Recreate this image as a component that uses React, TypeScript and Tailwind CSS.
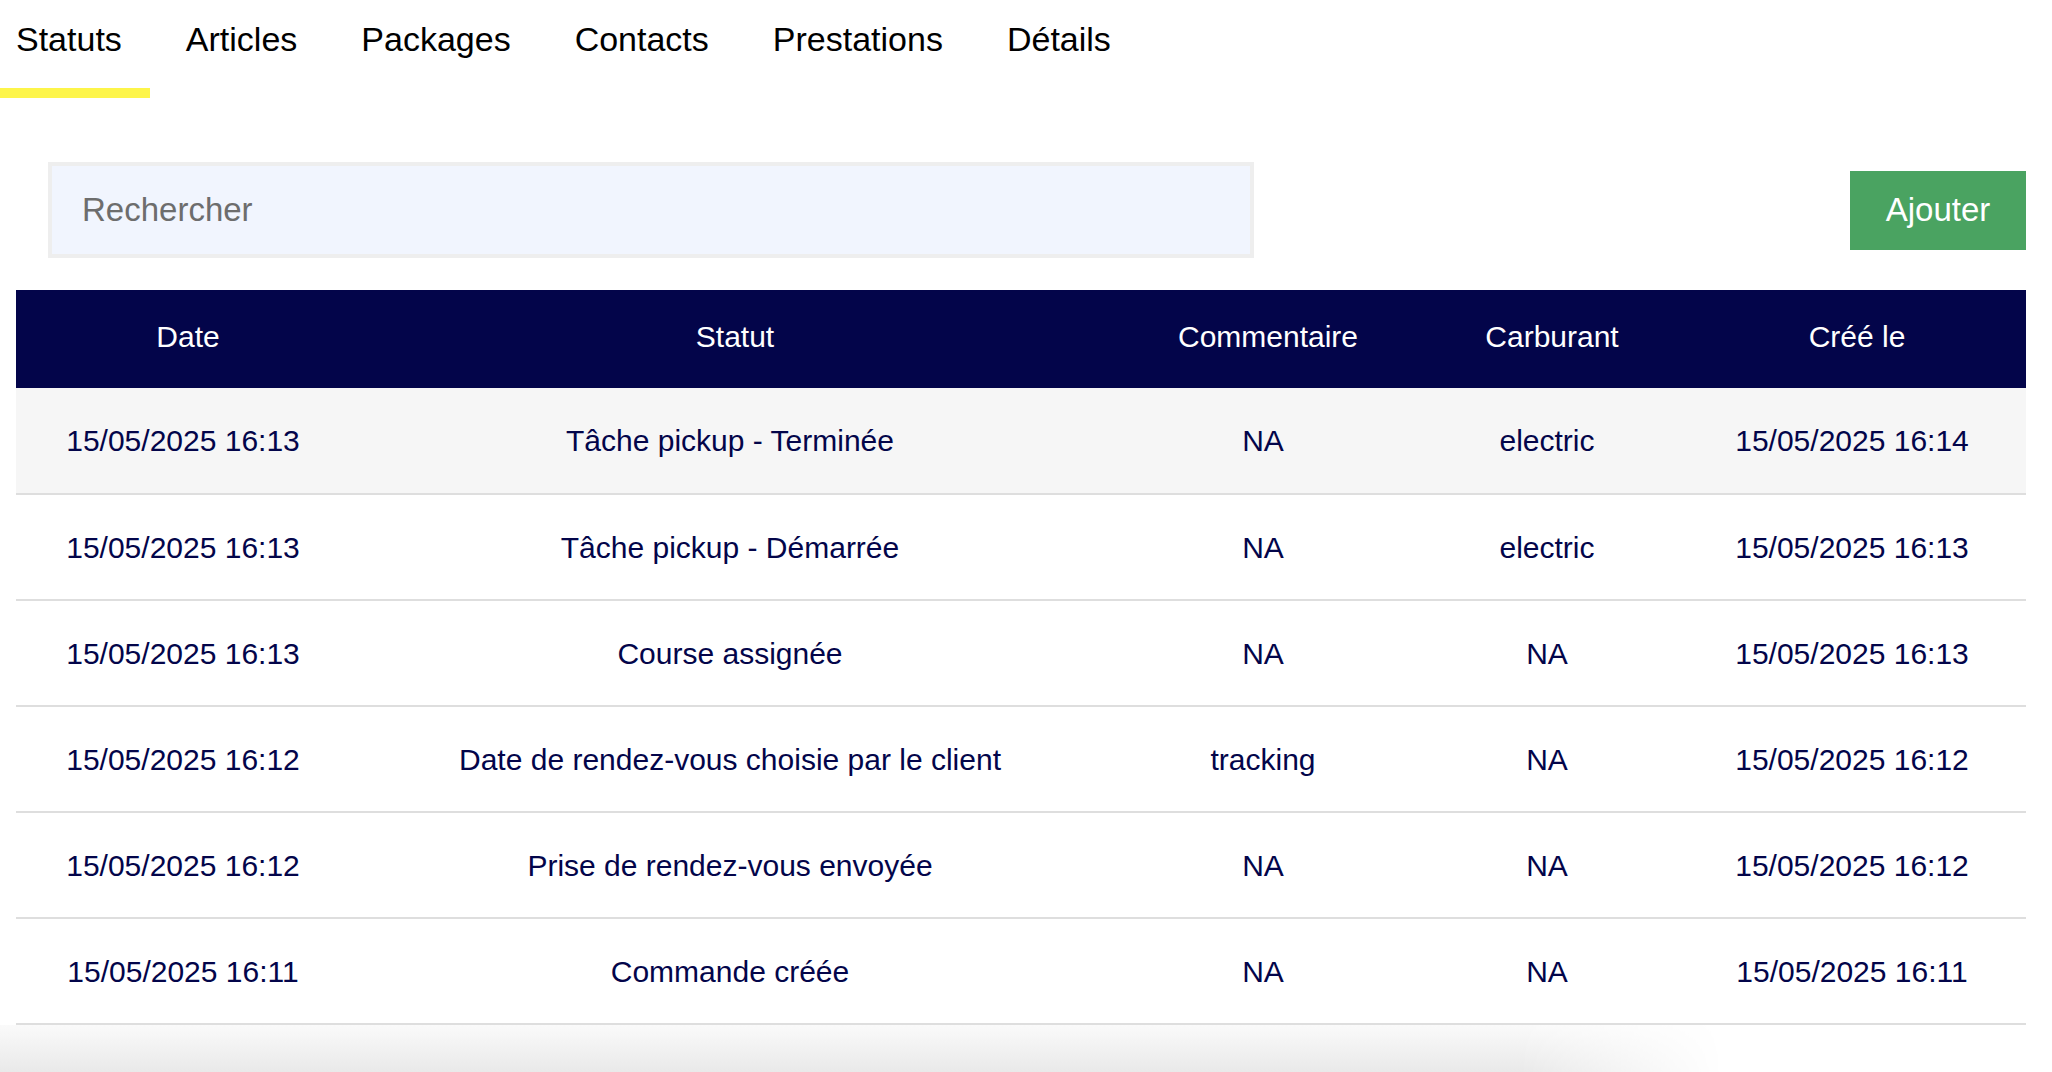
const tabs = ['Statuts', 'Articles', 'Packages', 'Contacts', 'Prestations', 'Détails']

const rows = [
    ['15/05/2025 16:13', 'Tâche pickup - Terminée', 'NA', 'electric', '15/05/2025 16:14'],
    ['15/05/2025 16:13', 'Tâche pickup - Démarrée', 'NA', 'electric', '15/05/2025 16:13'],
    ['15/05/2025 16:13', 'Course assignée', 'NA', 'NA', '15/05/2025 16:13'],
    ['15/05/2025 16:12', 'Date de rendez-vous choisie par le client', 'tracking', 'NA', '15/05/2025 16:12'],
    ['15/05/2025 16:12', 'Prise de rendez-vous envoyée', 'NA', 'NA', '15/05/2025 16:12'],
    ['15/05/2025 16:11', 'Commande créée', 'NA', 'NA', '15/05/2025 16:11'],
]

const headers = ['Date', 'Statut', 'Commentaire', 'Carburant', 'Créé le']

export default function App() {
    return (
        <div className="min-h-[1072px] bg-white font-['Liberation_Sans',Arial,sans-serif]">
            <nav className="flex h-[98px] items-stretch gap-[20px]">
                {tabs.map((tab, i) => (
                    <div key={tab} className="flex flex-col">
                        <div className="flex flex-1 items-center pb-[10px] pl-4 pr-[28px] text-[34px] text-black">
                            {tab}
                        </div>
                        <div className={i === 0 ? 'h-[10px] bg-[#fdf54a]' : 'h-[10px]'} />
                    </div>
                ))}
            </nav>

            <div className="pl-4 pr-[26px]">
                <div className="mt-16 flex items-center justify-between">
                    <input
                        className="ml-8 h-[96px] w-[1206px] border-4 border-[#eeeeee] bg-[#f1f5fe] px-[30px] text-[33px] text-[#333] outline-none placeholder:text-[#6d6d6d]"
                        placeholder="Rechercher"
                    />
                    <button className="h-[79px] w-[176px] bg-[#4aa361] text-[33px] text-white">
                        Ajouter
                    </button>
                </div>

                <table className="mt-8 w-full table-fixed border-collapse text-[#03054a]">
                    <colgroup>
                        <col className="w-[334px]" />
                        <col className="w-[760px]" />
                        <col className="w-[306px]" />
                        <col className="w-[262px]" />
                        <col className="w-[348px]" />
                    </colgroup>
                    <thead>
                        <tr className="bg-[#03054a] text-white">
                            {headers.map((h) => (
                                <th key={h} className="h-[98px] pb-[6px] pl-[10px] text-center text-[30px] font-normal">
                                    {h}
                                </th>
                            ))}
                        </tr>
                    </thead>
                    <tbody>
                        {rows.map((row, i) => (
                            <tr
                                key={i}
                                className={
                                    i === 0
                                        ? 'border-b-2 border-[#dedede] bg-[#f6f6f6]'
                                        : 'border-b-2 border-[#dedede]'
                                }
                            >
                                {row.map((cell, j) => (
                                    <td key={j} className="h-[106px] text-center text-[30px]">
                                        {cell}
                                    </td>
                                ))}
                            </tr>
                        ))}
                    </tbody>
                </table>
            </div>

            <div className="h-[47px] bg-[linear-gradient(to_bottom,#fafafa,#e9e9e9)] [mask-image:linear-gradient(to_right,black_74%,transparent_84%)]" />
        </div>
    )
}
